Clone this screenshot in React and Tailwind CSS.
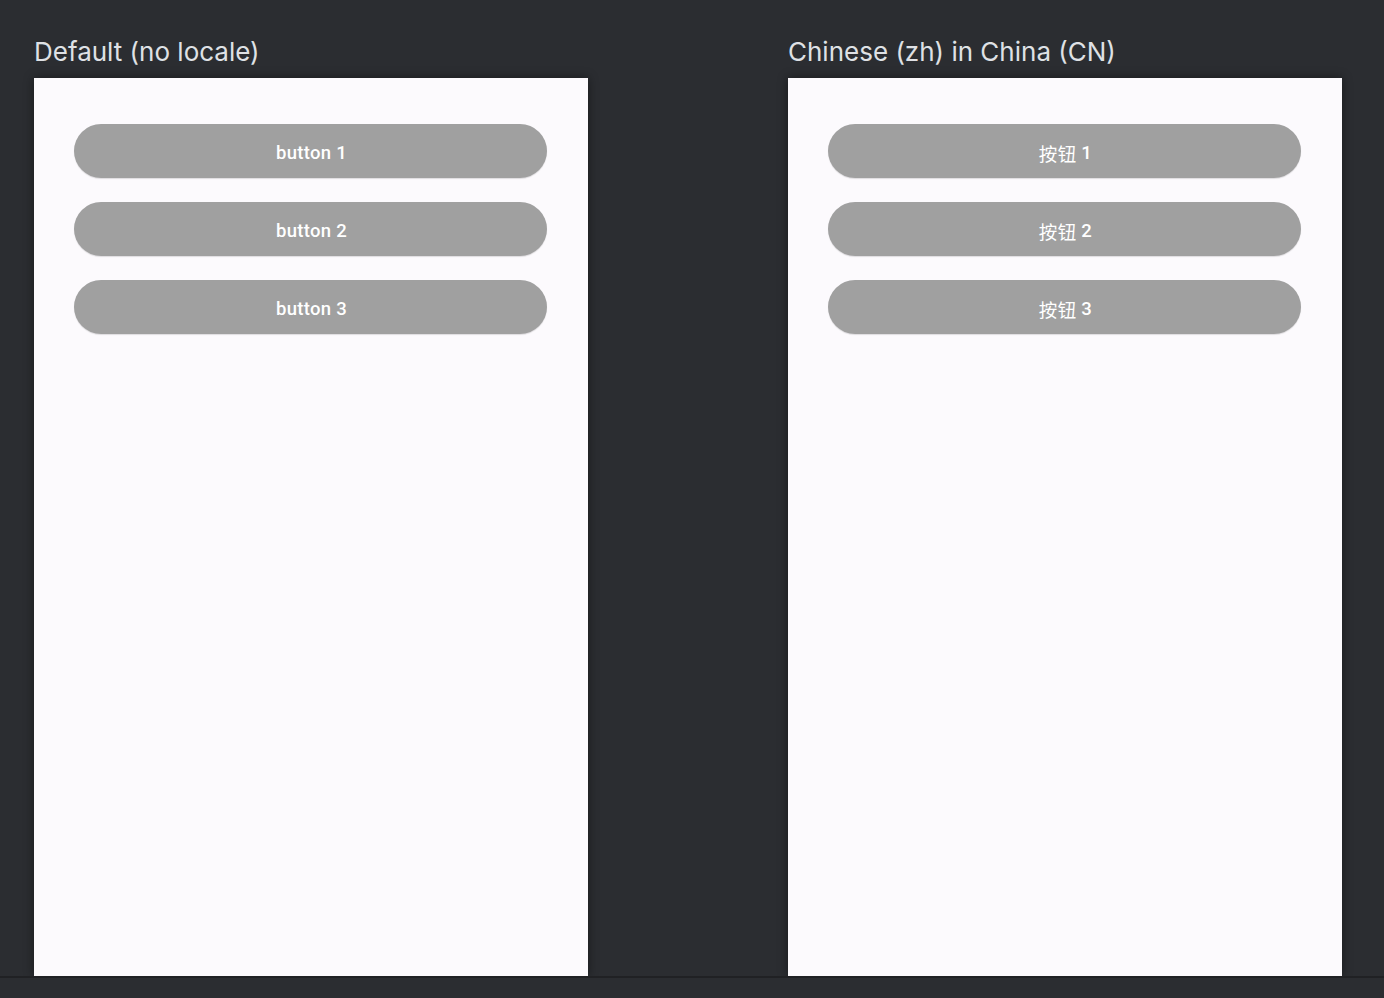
import React from "react";

const panels = [
  {
    title: "Default (no locale)",
    buttons: [["", "button 1"], ["", "button 2"], ["", "button 3"]],
  },
  {
    title: "Chinese (zh) in China (CN)",
    buttons: [["按钮", " 1"], ["按钮", " 2"], ["按钮", " 3"]],
  },
];

function Preview({ title, buttons }) {
  return (
    <div className="flex flex-col w-[554px]">
      <h2
        className="h-[78px] pt-[34px] text-[26px] leading-[36px] text-[#dfe1e5] whitespace-nowrap"
        style={{ fontFamily: "Inter, 'Noto Sans', sans-serif" }}
      >
        {title}
      </h2>
      <div className="h-[898px] bg-[#fcfafd] shadow-[0_0_10px_rgba(0,0,0,0.45)] pt-[46px] pl-[40px] pr-[41px] flex flex-col gap-[24px]">
        {buttons.map(([cjk, label]) => (
          <div
            key={cjk + label}
            className="h-[54px] pt-[4px] pl-[2px] rounded-full bg-[#a0a0a0] shadow-[0_1px_1px_rgba(0,0,0,0.12)] flex items-center justify-center text-white text-[18.5px] leading-[24px] tracking-[0.3px] font-medium whitespace-pre"
            style={{ fontFamily: "Roboto, sans-serif" }}
          >
            {cjk && (
              <span
                className="font-normal"
                style={{ fontFamily: "'Noto Sans CJK SC', sans-serif" }}
              >
                {cjk}
              </span>
            )}
            {label}
          </div>
        ))}
      </div>
    </div>
  );
}

export default function App() {
  return (
    <div className="w-[1384px] h-[998px] bg-[#2b2d31] overflow-hidden flex flex-col">
      <div className="flex gap-[200px] pl-[34px] h-[976px]">
        {panels.map((p) => (
          <Preview key={p.title} {...p} />
        ))}
      </div>
      <div className="flex-1 border-t-2 border-[#202124] bg-[#2b2d31]" />
    </div>
  );
}
